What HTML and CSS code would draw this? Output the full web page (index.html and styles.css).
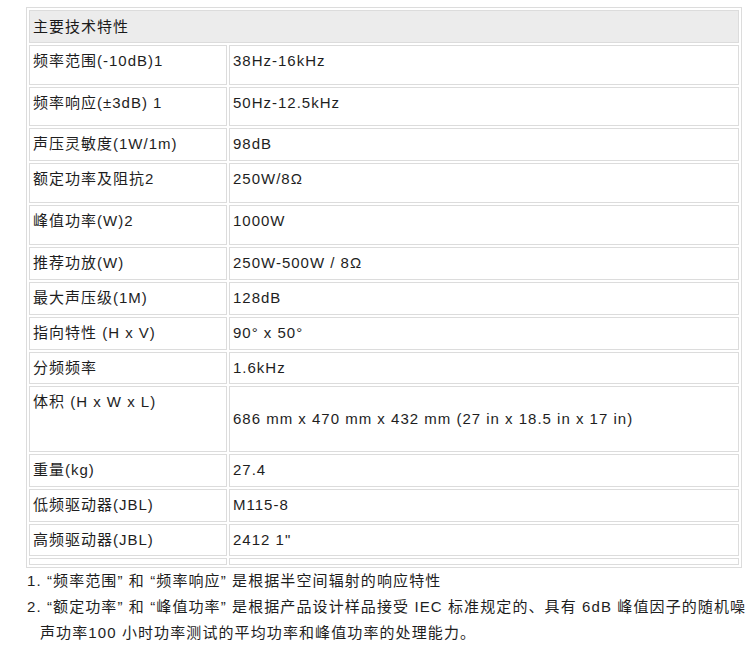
FILE: index.html
```html
<!DOCTYPE html>
<html lang="zh-CN">
<head>
<meta charset="utf-8">
<title>主要技术特性</title>
<link rel="stylesheet" href="styles.css">
</head>
<body>
<div class="page">
  <table class="spec">
    <colgroup>
      <col class="c1">
      <col class="c2">
    </colgroup>
    <tr class="h33"><th colspan="2" class="head">主要技术特性</th></tr>
    <tr class="h40"><td>频率范围(-10dB)1</td><td>38Hz-16kHz</td></tr>
    <tr class="h39"><td>频率响应(±3dB) 1</td><td>50Hz-12.5kHz</td></tr>
    <tr class="h33"><td>声压灵敏度(1W/1m)</td><td>98dB</td></tr>
    <tr class="h40"><td>额定功率及阻抗2</td><td>250W/8Ω</td></tr>
    <tr class="h40"><td>峰值功率(W)2</td><td>1000W</td></tr>
    <tr class="h33"><td>推荐功放(W)</td><td>250W-500W / 8Ω</td></tr>
    <tr class="h33"><td>最大声压级(1M)</td><td>128dB</td></tr>
    <tr class="h33"><td>指向特性 (H x V)</td><td>90° x 50°</td></tr>
    <tr class="h32"><td>分频频率</td><td>1.6kHz</td></tr>
    <tr class="h66"><td>体积 (H x W x L)</td><td class="mid">686 mm x 470 mm x 432 mm (27 in x 18.5 in x 17 in)</td></tr>
    <tr class="h33"><td>重量(kg)</td><td>27.4</td></tr>
    <tr class="h33"><td>低频驱动器(JBL)</td><td>M115-8</td></tr>
    <tr class="h32"><td>高频驱动器(JBL)</td><td>2412 1"</td></tr>
    <tr class="h7"><td class="empty"></td><td class="empty"></td></tr>
  </table>
  <div class="notes">
    <p class="note">1. “频率范围” 和 “频率响应” 是根据半空间辐射的响应特性</p>
    <p class="note">2. “额定功率” 和 “峰值功率” 是根据产品设计样品接受 IEC 标准规定的、具有 6dB 峰值因子的随机噪<br>声功率100 小时功率测试的平均功率和峰值功率的处理能力。</p>
  </div>
</div>
</body>
</html>
```
FILE: styles.css
```css
html, body {
  margin: 0;
  padding: 0;
  background: #ffffff;
}
body {
  font-family: "Liberation Sans", Arial, "Noto Sans CJK SC", sans-serif;
  color: #1e1e1e;
}
.page {
  padding: 7px 0 0 26px;
}
.spec {
  width: 716px;
  border: 1px solid #dcdcdc;
  border-collapse: separate;
  border-spacing: 2px;
  table-layout: fixed;
}
.c1 { width: 198px; }
.c2 { width: 510px; }
.spec th,
.spec td {
  border: 1px solid #dcdcdc;
  padding: 5px 3px 0 3px;
  font-size: 15px;
  line-height: 20px;
  letter-spacing: 1px;
  vertical-align: top;
  text-align: left;
  font-weight: normal;
  white-space: nowrap;
  overflow: hidden;
}
.spec .head {
  background: #ececec;
  padding-top: 6px;
  color: #1a1a1a;
}
.spec .mid {
  vertical-align: middle;
  padding-top: 0;
}
.spec .empty {
  padding: 0;
  line-height: 0;
}
.h32 { height: 32px; }
.h33 { height: 33px; }
.h39 { height: 39px; }
.h40 { height: 40px; }
.h66 { height: 66px; }
.h7 { height: 7px; }
.notes {
  padding-left: 1px;
}
.note {
  margin: 0;
  font-size: 15px;
  line-height: 26px;
  letter-spacing: 1.1px;
  padding-left: 13px;
  text-indent: -13px;
  white-space: nowrap;
  color: #1e1e1e;
}
```
